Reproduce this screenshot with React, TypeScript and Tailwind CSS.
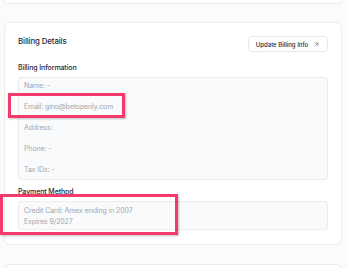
import React from "react";
import { ArrowUpRight } from "lucide-react";

const rows = ["Name: -", "Email: gino@betopenly.com", "Address:", "Phone: -", "Tax IDs: -"];

const App = () => {
    return (
        <div className="relative w-[348px] h-[268px] overflow-hidden bg-[#fbfbfb] px-[4px] font-['Inter',sans-serif]">
            <div className="h-[4px] w-[338px] bg-white border border-t-0 border-[#ececec] rounded-b-[6px]"></div>

            <div className="mt-[18px] w-[338px] h-[223px] bg-white border border-[#ececec] rounded-[6px] px-[13px] pt-[13px]">
                <div className="flex items-center justify-between h-[16px]">
                    <p className="text-[7.8px] font-medium tracking-[-0.1px] text-[#1f2937] -mt-[4px]">Billing Details</p>
                    <button className="flex items-center gap-[5px] h-[16px] w-[80px] justify-center rounded-[4px] border border-[#e5e7eb] bg-white text-[6px] font-medium text-[#1f2937]">
                        Update Billing Info
                        <ArrowUpRight size={7} strokeWidth={1.75} className="text-[#4b5563]" />
                    </button>
                </div>

                <p className="mt-[11px] mb-[4px] h-[10px] leading-[10px] text-[7px] font-medium tracking-[-0.1px] text-[#1f2937]">Billing Information</p>
                <div className="flex flex-col gap-[11px] border border-[#ececec] bg-[#f9fafb] rounded-[3px] px-[5px] pt-[3px] pb-[4px]">
                    {rows.map((r) => (
                        <p key={r} className="h-[10px] leading-[10px] text-[7px] tracking-[-0.1px] text-[#a3a7ae]">{r}</p>
                    ))}
                </div>

                <p className="mt-[7px] mb-[4px] h-[10px] leading-[10px] text-[7px] font-medium tracking-[-0.1px] text-[#1f2937]">Payment Method</p>
                <div className="flex flex-col border border-[#ececec] bg-[#f9fafb] rounded-[3px] px-[5px] pt-[3px] pb-[2px]">
                    <p className="h-[11px] leading-[11px] text-[7px] tracking-[-0.1px] text-[#a3a7ae]">Credit Card: Amex ending in 2007</p>
                    <p className="h-[11px] leading-[11px] text-[7px] tracking-[-0.1px] text-[#a3a7ae]">Expires 9/2027</p>
                </div>
            </div>

            <div className="mt-[19px] w-[338px] h-[20px] bg-white border border-b-0 border-[#ececec] rounded-t-[6px]"></div>

            <div className="absolute left-[8px] top-[93px] w-[117px] h-[25px] border-[3px] border-[#f23b6c] shadow-[1px_1px_2px_rgba(0,0,0,0.25)]"></div>
            <div className="absolute left-[0px] top-[194px] w-[178px] h-[41px] border-[3px] border-[#f23b6c] shadow-[1px_1px_2px_rgba(0,0,0,0.25)]"></div>
        </div>
    );
};

export default App;
